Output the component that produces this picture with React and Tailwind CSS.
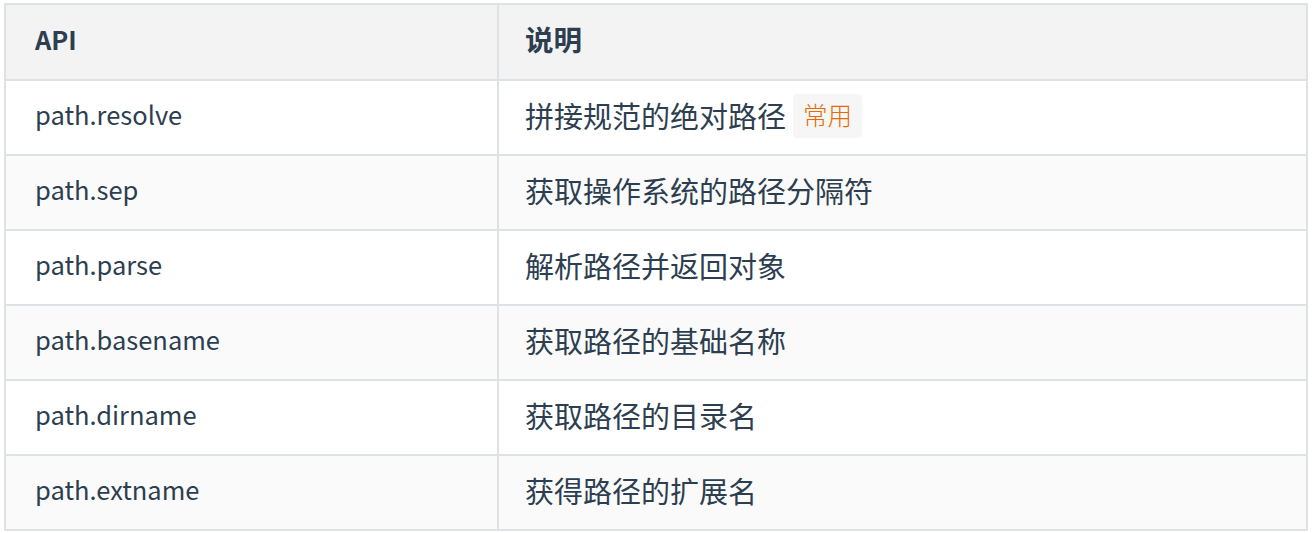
const rows = [
  { api: "path.resolve", desc: "拼接规范的绝对路径", tag: "常用" },
  { api: "path.sep", desc: "获取操作系统的路径分隔符" },
  { api: "path.parse", desc: "解析路径并返回对象" },
  { api: "path.basename", desc: "获取路径的基础名称" },
  { api: "path.dirname", desc: "获取路径的目录名" },
  { api: "path.extname", desc: "获得路径的扩展名" },
];

export default function App() {
  return (
    <div
      className="bg-white w-[1314px] h-[533px] pt-[3px] pl-[4px] text-[#2c3e50]"
      style={{ fontFamily: '"Noto Sans CJK SC", "Noto Sans", sans-serif' }}
    >
      <div className="w-[1304px] border-2 border-[#dfe2e5]">
        {/* header */}
        <div className="flex h-[74px] bg-[#f3f3f3] font-bold">
          <div className="w-[493px] shrink-0 border-r-2 border-[#dfe2e5] flex items-center pb-[6px] px-[29px] text-[25.5px]">
            API
          </div>
          <div className="flex-1 flex items-center pb-[6px] px-[26px] text-[28.5px]">
            说明
          </div>
        </div>

        {rows.map((row, i) => (
          <div
            key={row.api}
            className={`flex h-[75px] border-t-2 border-[#dfe2e5] ${
              i % 2 === 1 ? "bg-[#fafafa]" : "bg-white"
            }`}
          >
            <div className="w-[493px] shrink-0 border-r-2 border-[#dfe2e5] flex items-center pb-[6px] px-[29px] text-[25.5px]">
              {row.api}
            </div>
            <div className="flex-1 flex items-center pb-[4px] px-[26px] text-[29px]">
              {row.desc}
              {row.tag && (
                <span className="ml-[7px] px-[10px] h-[44px] flex items-center rounded-[4px] bg-[#f6f6f6] text-[#e96900] text-[24.5px] font-light">
                  {row.tag}
                </span>
              )}
            </div>
          </div>
        ))}
      </div>
    </div>
  );
}
